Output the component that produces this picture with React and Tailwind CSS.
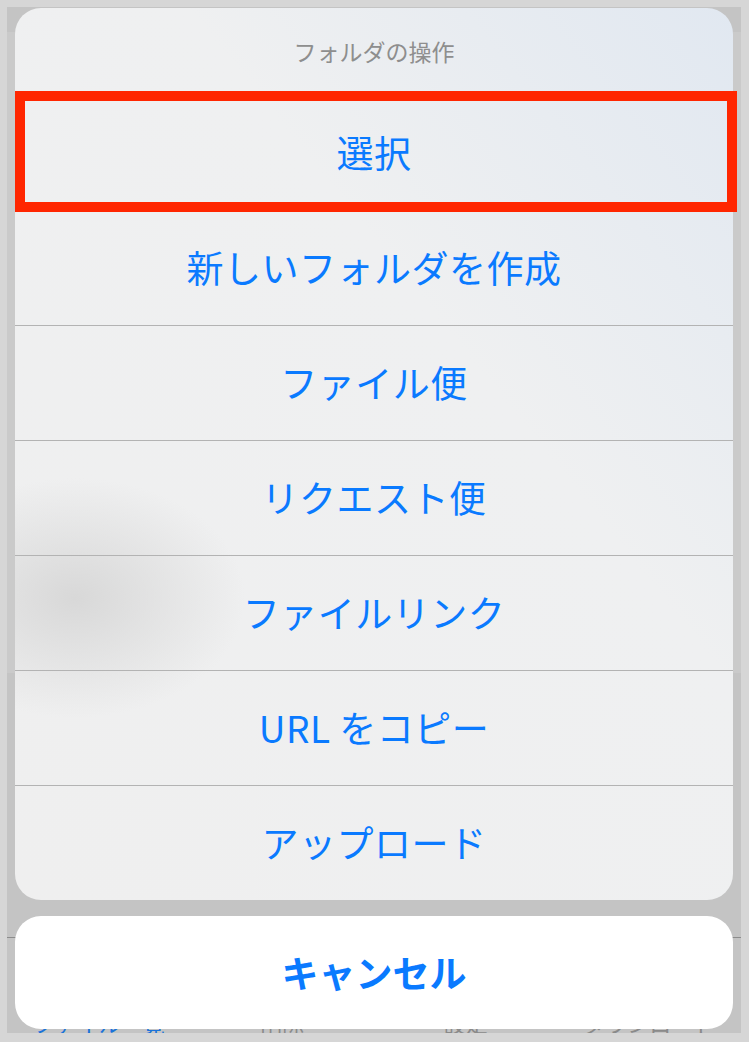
const actions = [
  '選択',
  '新しいフォルダを作成',
  'ファイル便',
  'リクエスト便',
  'ファイルリンク',
  'URL をコピー',
  'アップロード',
];

const tabs = [
  { label: 'ファイル一覧', color: 'text-[#1a73d9]' },
  { label: '削除', color: 'text-[#8a8a8a]' },
  { label: '設定', color: 'text-[#8a8a8a]' },
  { label: 'ダウンロード', color: 'text-[#8a8a8a]' },
];

const font = { fontFamily: '"Noto Sans CJK JP", "Noto Sans", sans-serif' };

export default function App() {
  return (
    <div className="w-[749px] h-[1042px] bg-[#d6d6d6] pt-[7px] pl-[7px] pr-[8px] pb-[9px]" style={font}>
      <div className="relative h-full overflow-hidden">
        {/* dimmed app behind the sheet */}
        <div className="h-full flex flex-col">
          <div className="h-[25px] bg-[#c4c4c4]" />
          <div className="h-[651px] bg-[#cacaca]" />
          <div className="flex-1 flex flex-col bg-[#c4c4c4]">
            <div className="h-[264px]" />
            <div className="border-t border-[#8c8c8c] pt-[73px] grid grid-cols-4 text-[22px] leading-none">
              {tabs.map((t) => (
                <span key={t.label} className={`text-center ${t.color}`}>
                  {t.label}
                </span>
              ))}
            </div>
          </div>
        </div>

        {/* action sheet */}
        <div className="absolute inset-0 flex flex-col gap-4 px-2 pt-px">
          <div className="h-[892px] rounded-[26px] overflow-hidden bg-[radial-gradient(ellipse_170px_120px_at_60px_590px,#d8d8d8,rgba(216,216,216,0)),linear-gradient(to_bottom_left,#e1e8f1,#eff0f1_38%,#efefef)]">
            <div className="h-[87px] flex items-center justify-center text-[23px] text-[#8e8e8e]">
              フォルダの操作
            </div>
            {actions.map((a) => (
              <div
                key={a}
                className="h-[115px] border-t border-[#b3b3b3] flex items-center justify-center text-[37px] text-[#0a7aff] tracking-[0.5px]"
              >
                {a}
              </div>
            ))}
          </div>

          <div className="h-[113px] rounded-[26px] bg-white flex items-center justify-center text-[37px] font-bold text-[#0a7aff]">
            キャンセル
          </div>
        </div>

        {/* highlight annotation */}
        <div className="absolute left-[8px] top-[84px] w-[722px] h-[121px] border-[10px] border-[#ff2600]" />
      </div>
    </div>
  );
}
